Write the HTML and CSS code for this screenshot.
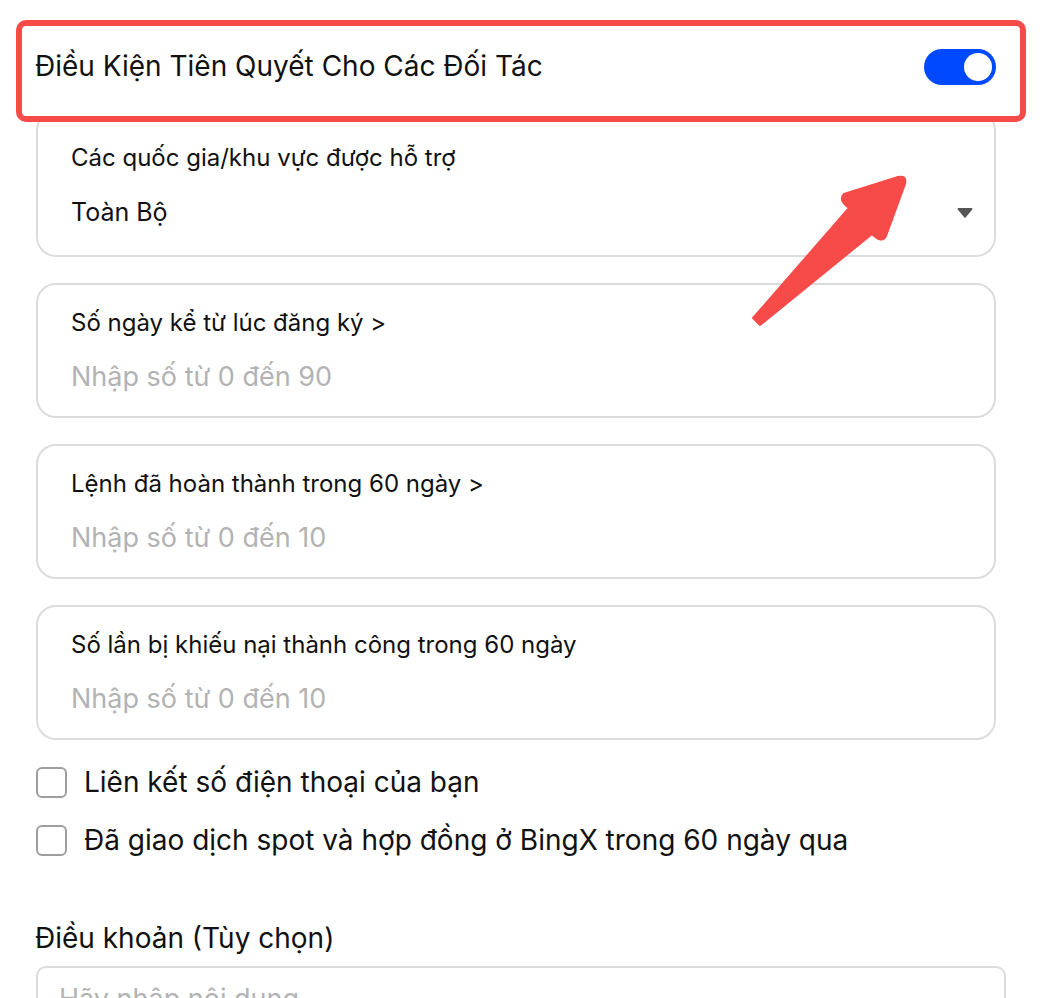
FILE: index.html
```html
<!DOCTYPE html>
<html lang="vi">
<head>
  <meta charset="UTF-8">
  <meta name="viewport" content="width=device-width, initial-scale=1.0">
  <title>Điều Kiện Tiên Quyết Cho Các Đối Tác</title>
  <link rel="stylesheet" href="styles.css">
</head>
<body>
  <div class="page">
    <div class="header-row">
      <span class="header-title">Điều Kiện Tiên Quyết Cho Các Đối Tác</span>
      <span class="toggle"><span class="knob"></span></span>
    </div>

    <div class="field field-first">
      <div class="field-label">Các quốc gia/khu vực được hỗ trợ</div>
      <div class="field-value select">
        <span>Toàn Bộ</span>
        <svg class="caret" width="16" height="11" viewBox="0 0 16 11"><path d="M1.5 1h13a1 1 0 0 1 .8 1.6l-6.5 7.6a1 1 0 0 1-1.6 0L.7 2.6A1 1 0 0 1 1.5 1z" fill="#555"/></svg>
      </div>
    </div>

    <div class="field">
      <div class="field-label">Số ngày kể từ lúc đăng ký &gt;</div>
      <div class="field-value placeholder">Nhập số từ 0 đến 90</div>
    </div>

    <div class="field">
      <div class="field-label">Lệnh đã hoàn thành trong 60 ngày &gt;</div>
      <div class="field-value placeholder">Nhập số từ 0 đến 10</div>
    </div>

    <div class="field">
      <div class="field-label">Số lần bị khiếu nại thành công trong 60 ngày</div>
      <div class="field-value placeholder">Nhập số từ 0 đến 10</div>
    </div>

    <div class="checks">
      <label class="check"><span class="box"></span>Liên kết số điện thoại của bạn</label>
      <label class="check"><span class="box"></span>Đã giao dịch spot và hợp đồng ở BingX trong 60 ngày qua</label>
    </div>

    <div class="terms-label">Điều khoản (Tùy chọn)</div>
    <div class="terms-box"><span class="placeholder">Hãy nhập nội dung</span></div>
  </div>

  <!-- annotation arrow -->
  <svg class="arrow" width="1064" height="998" viewBox="0 0 1064 998">
    <path d="M753 318 L849 208 Q838 200 844 194 L898 177 Q907 175 905 184 L886 236 Q882 244 872 234 L760 325 Z" fill="#f64b49" stroke="#f64b49" stroke-width="2" stroke-linejoin="round"/>
  </svg>
</body>
</html>
```

FILE: styles.css
```css
:root {
  --text: #111;
  --muted: #b3b3b3;
  --border: #dcdcdc;
  --red: #f64b49;
  --blue: #0049ff;
}
body {
  margin: 0;
  font-family: Inter, "Noto Sans", sans-serif;
  color: var(--text);
  background: #fff;
  overflow: hidden;
}
.page {
  padding: 20px 0 0 36px;
  width: 960px;
}
.header-row {
  position: relative;
  z-index: 1;
  margin-left: -20px;
  width: 1010px;
  height: 102px;
  border: 6px solid var(--red);
  border-radius: 10px;
  background: #fff;
  display: flex;
  align-items: center;
  justify-content: space-between;
  padding: 0 24px 10px 13px;
  box-sizing: border-box;
}
.header-title {
  font-size: 28px;
}
.toggle {
  width: 72px;
  height: 36px;
  border-radius: 18px;
  background: var(--blue);
  display: flex;
  align-items: center;
  justify-content: flex-end;
  padding: 0 4px;
  box-sizing: border-box;
  margin-top: 2px;
}
.knob {
  width: 28px;
  height: 28px;
  border-radius: 50%;
  background: #fff;
}
.field {
  border: 2px solid var(--border);
  border-radius: 20px;
  padding: 22px 33px 21px;
  margin-top: 26px;
  height: 135px;
  box-sizing: border-box;
}
.field-first {
  margin-top: -12px;
  padding-top: 30px;
  height: 147px;
}
.field-label {
  font-size: 24px;
  line-height: 32px;
}
.field-value {
  font-size: 27px;
  line-height: 36px;
  margin-top: 20px;
}
.select {
  font-size: 25px;
  display: flex;
  align-items: center;
  justify-content: space-between;
  margin-right: -12px;
}
.placeholder {
  color: var(--muted);
}
.checks {
  margin-top: 27px;
  display: flex;
  flex-direction: column;
  gap: 27px;
}
.check {
  display: flex;
  align-items: center;
  gap: 17px;
  font-size: 28px;
  line-height: 31px;
}
.box {
  width: 31px;
  height: 31px;
  border: 2px solid #9e9e9e;
  border-radius: 6px;
  box-sizing: border-box;
  flex: none;
}
.terms-label {
  margin-top: 66px;
  font-size: 28px;
  line-height: 32px;
  margin-left: -1px;
}
.terms-box {
  margin-top: 12px;
  width: 970px;
  height: 120px;
  border: 2px solid var(--border);
  border-radius: 10px;
  box-sizing: border-box;
  padding: 14px 21px;
  font-size: 27px;
}
.arrow {
  position: absolute;
  left: 0;
  top: 0;
  pointer-events: none;
}
```
